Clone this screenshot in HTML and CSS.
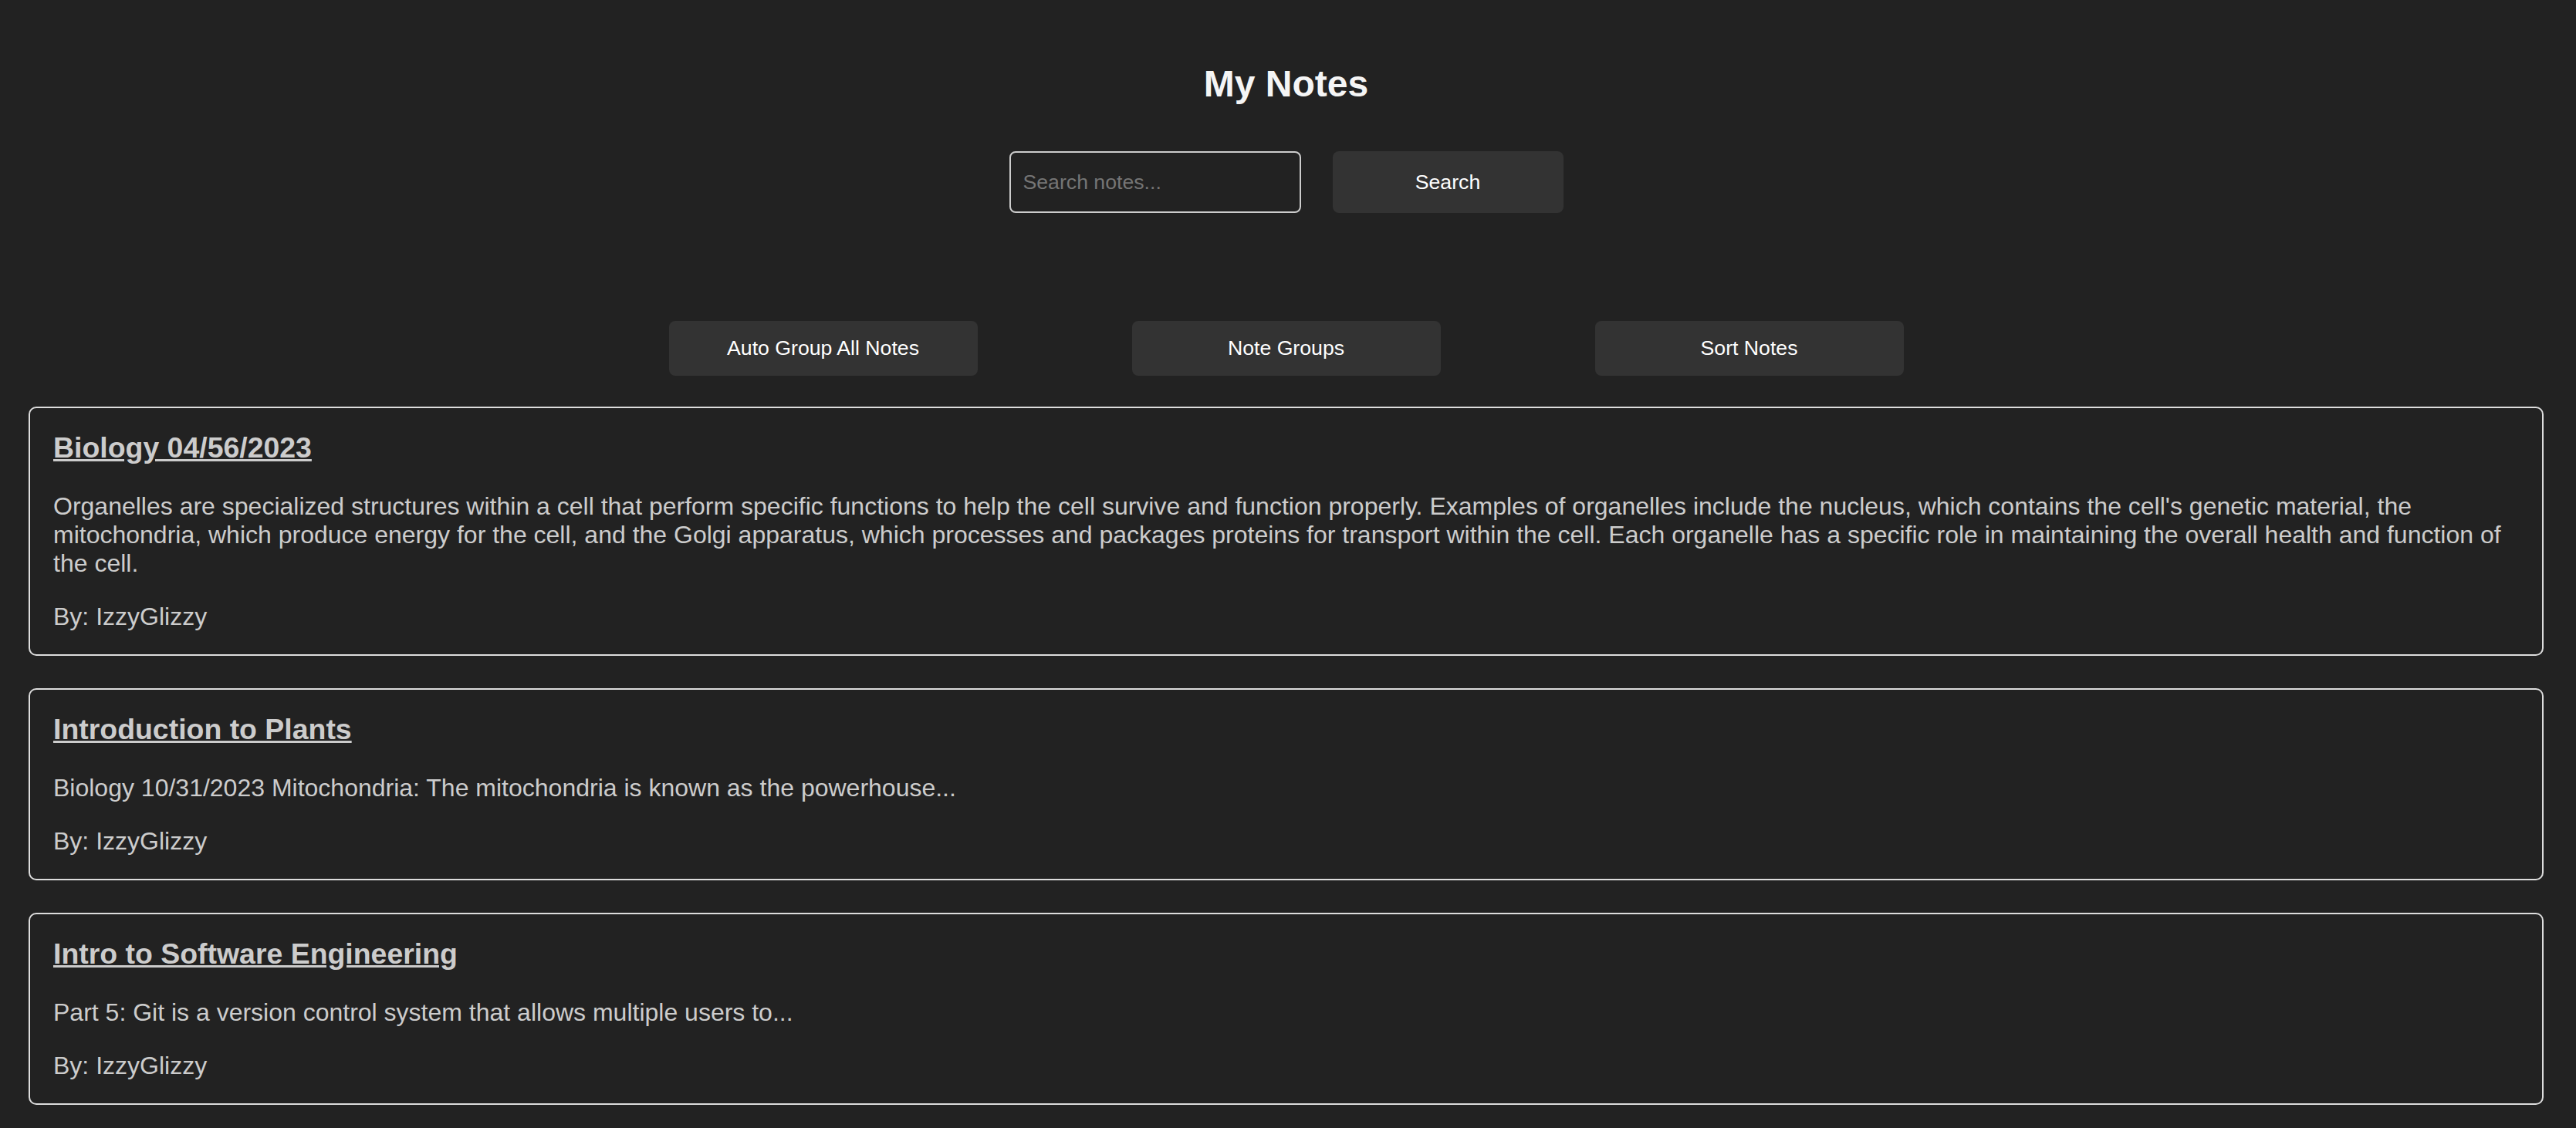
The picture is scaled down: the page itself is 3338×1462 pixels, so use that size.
FILE: index.html
```html
<!DOCTYPE html>
<html lang="en">
<head>
<meta charset="utf-8">
<title>My Notes</title>
<link rel="stylesheet" href="styles.css">
</head>
<body>
<main class="page">
  <header class="header">
    <h1 class="title">My Notes</h1>
    <form class="search">
      <input class="search-input" type="text" placeholder="Search notes...">
      <button class="search-btn" type="button">Search</button>
    </form>
  </header>
  <div class="actions">
    <button class="action-btn" type="button">Auto Group All Notes</button>
    <button class="action-btn" type="button">Note Groups</button>
    <button class="action-btn" type="button">Sort Notes</button>
  </div>
  <section class="notes">
    <article class="note">
      <h3 class="note-title"><a class="note-link" href="#">Biology 04/56/2023</a></h3>
      <p class="note-text">Organelles are specialized structures within a cell that perform specific functions to help the cell survive and function properly. Examples of organelles include the nucleus, which contains the cell's genetic material, the mitochondria, which produce energy for the cell, and the Golgi apparatus, which processes and packages proteins for transport within the cell. Each organelle has a specific role in maintaining the overall health and function of the cell.</p>
      <p class="note-author">By: IzzyGlizzy</p>
    </article>
    <article class="note">
      <h3 class="note-title"><a class="note-link" href="#">Introduction to Plants</a></h3>
      <p class="note-text">Biology 10/31/2023 Mitochondria: The mitochondria is known as the powerhouse...</p>
      <p class="note-author">By: IzzyGlizzy</p>
    </article>
    <article class="note">
      <h3 class="note-title"><a class="note-link" href="#">Intro to Software Engineering</a></h3>
      <p class="note-text">Part 5: Git is a version control system that allows multiple users to...</p>
      <p class="note-author">By: IzzyGlizzy</p>
    </article>
  </section>
</main>
</body>
</html>
```
FILE: styles.css
```css
html, body {
  margin: 0;
  padding: 0;
  background: #222222;
}

body {
  font-family: "Liberation Sans", Arial, Helvetica, sans-serif;
  color: #cccccc;
}

.page {
  padding: 0 42px 0 37px;
}

.header {
  display: flex;
  flex-direction: column;
  align-items: center;
  padding-top: 81px;
}

.title {
  margin: 0;
  font-size: 48px;
  font-weight: bold;
  line-height: normal;
  color: #f5f5f5;
}

.search {
  display: flex;
  gap: 41px;
  margin: 60px 0 0;
}

.search-input {
  box-sizing: border-box;
  width: 378px;
  height: 80px;
  padding: 0 16px;
  border: 2px solid #cccccc;
  border-radius: 8px;
  background: #222222;
  color: #dddddd;
  font-family: "Liberation Sans", Arial, sans-serif;
  font-size: 26.67px;
  outline: none;
}

.search-input::placeholder {
  color: #757575;
}

.search-btn {
  box-sizing: border-box;
  width: 299px;
  height: 80px;
  border: none;
  border-radius: 8px;
  background: #333333;
  color: #ffffff;
  font-family: "Liberation Sans", Arial, sans-serif;
  font-size: 26.67px;
  cursor: pointer;
}

.actions {
  display: flex;
  justify-content: center;
  gap: 200px;
  margin-top: 140px;
}

.action-btn {
  box-sizing: border-box;
  width: 400px;
  height: 71px;
  border: none;
  border-radius: 8px;
  background: #333333;
  color: #ffffff;
  font-family: "Liberation Sans", Arial, sans-serif;
  font-size: 26.67px;
  cursor: pointer;
}

.notes {
  display: flex;
  flex-direction: column;
  gap: 42px;
  margin-top: 40px;
}

.note {
  border: 2px solid #dddddd;
  border-radius: 10px;
  padding: 30px;
}

.note-title {
  margin: 0 0 36px;
  font-size: 37.44px;
  font-weight: bold;
  line-height: normal;
}

.note-link {
  color: #cccccc;
  text-decoration: underline;
}

.note-text {
  margin: 0 0 32px;
  font-size: 32px;
  line-height: normal;
}

.note-author {
  margin: 0;
  font-size: 32px;
  line-height: normal;
}
```
